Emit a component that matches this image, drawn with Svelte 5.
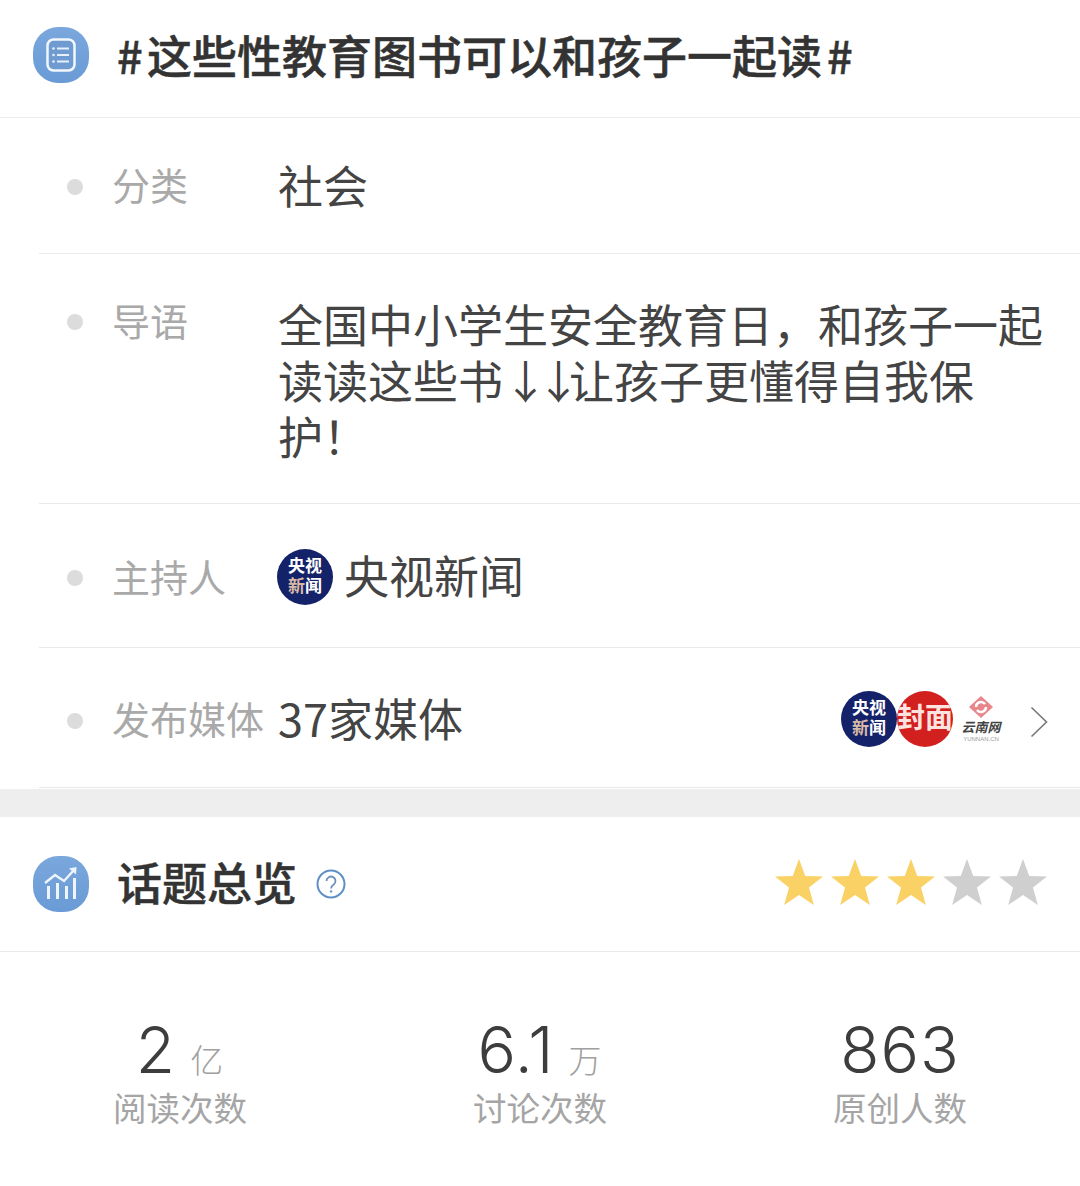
<script lang="ts">
  const rowStars = [true, true, true, false, false];
  const stats = [
    { value: '2', unit: '亿', label: '阅读次数' },
    { value: '6.1', unit: '万', label: '讨论次数' },
    { value: '863', unit: '', label: '原创人数' }
  ];
</script>

{#snippet cctv()}
  <span class="logo cctv">
    <span>央视</span>
    <span><em>新</em>闻</span>
  </span>
{/snippet}

<main class="page">
  <header class="head topic">
    <span class="badge">
      <svg viewBox="0 0 56 56" width="56" height="56">
        <rect x="14.5" y="12.5" width="27" height="31" rx="6" fill="#6f9bd0" stroke="#f2f7fc" stroke-width="2.5" />
        <g fill="#e6f0fa">
          <circle cx="20.5" cy="21.5" r="1.3" />
          <circle cx="20.5" cy="28" r="1.3" />
          <circle cx="20.5" cy="34.5" r="1.3" />
          <rect x="24" y="20.5" width="12" height="2" />
          <rect x="24" y="27" width="12" height="2" />
          <rect x="24" y="33.5" width="12" height="2" />
        </g>
      </svg>
    </span>
    <h1><span class="hash">#</span>这些性教育图书可以和孩子一起读<span class="hash end">#</span></h1>
  </header>

  <section class="rows">
    <div class="row first">
      <span class="dot"></span>
      <span class="label">分类</span>
      <div class="value">社会</div>
    </div>
    <div class="row intro">
      <span class="dot"></span>
      <span class="label">导语</span>
      <div class="value">全国中小学生安全教育日，和孩子一起读读这些书<span class="arrows">↓↓</span>让孩子更懂得自我保护！</div>
    </div>
    <div class="row host">
      <span class="dot"></span>
      <span class="label">主持人</span>
      <div class="value with-logo">
        {@render cctv()}
        <span>央视新闻</span>
      </div>
    </div>
    <div class="row media">
      <span class="dot"></span>
      <span class="label">发布媒体</span>
      <div class="value">37家媒体</div>
      <div class="media-logos">
        {@render cctv()}
        <span class="logo fengmian">封面</span>
        <span class="yunnan">
          <svg viewBox="0 0 32 24" width="32" height="24">
            <path d="M16 1 L28 12 L16 23 L4 12 Z" fill="#e8868c" />
            <path d="M11 12 a5 5 0 0 1 9 -3 M21 12 a5 5 0 0 1 -9 3" fill="none" stroke="#fff" stroke-width="2.4" />
          </svg>
          <b>云南网</b>
          <i>YUNNAN.CN</i>
        </span>
        <svg class="chevron" viewBox="0 0 18 32" width="18" height="32">
          <path d="M1.5 1.5 L16.5 16 L1.5 30.5" fill="none" stroke="#777" stroke-width="1.6" />
        </svg>
      </div>
    </div>
  </section>

  <div class="band"></div>

  <header class="head overview">
    <span class="badge">
      <svg viewBox="0 0 56 56" width="56" height="56">
        <g fill="#eef5fc">
          <rect x="14" y="30" width="3" height="13" />
          <rect x="23" y="27" width="3" height="16" />
          <rect x="32" y="30" width="3" height="13" />
          <rect x="40" y="22" width="3" height="21" />
        </g>
        <path d="M12 27 L22 19 L31 25 L41 14" fill="none" stroke="#eef5fc" stroke-width="2.4" />
        <path d="M36 12.5 L43.5 11 L43 18.5 Z" fill="#eef5fc" />
      </svg>
    </span>
    <h2>话题总览</h2>
    <svg class="help" viewBox="0 0 30 30" width="30" height="30">
      <circle cx="15" cy="15" r="13.5" fill="none" stroke="#5f8fc4" stroke-width="2" />
      <path d="M10.5 12 a4.5 4.5 0 1 1 7 3.8 c-1.6 1 -2.4 1.8 -2.4 3.6" fill="none" stroke="#6d8fb8" stroke-width="1.8" />
      <circle cx="15.1" cy="22.4" r="1.2" fill="#6d8fb8" />
    </svg>
    <div class="stars">
      {#each rowStars as on}
        <svg viewBox="0 0 50 48" width="50" height="48">
          <path
            d="M25 1 L31.2 18 L49 18.6 L35 29.6 L39.8 47 L25 37 L10.2 47 L15 29.6 L1 18.6 L18.8 18 Z"
            fill={on ? '#f9d164' : '#cfcfcf'}
          />
        </svg>
      {/each}
    </div>
  </header>

  <section class="stats">
    {#each stats as s}
      <div class="stat">
        <div class="num">{s.value}{#if s.unit}<small>{s.unit}</small>{/if}</div>
        <div class="stat-label">{s.label}</div>
      </div>
    {/each}
  </section>
</main>

<style>
  :global(body) {
    margin: 0;
    background: #fff;
  }

  .page {
    width: 1080px;
    height: 1186px;
    overflow: hidden;
    background: #fff;
    font-family: "Noto Sans CJK SC", "Liberation Sans", sans-serif;
    color: #444;
  }

  .head {
    display: flex;
    align-items: center;
    padding-left: 33px;
    box-sizing: border-box;
  }

  .topic {
    height: 118px;
    padding-bottom: 7px;
    border-bottom: 1px solid #ececec;
  }

  .badge {
    width: 56px;
    height: 56px;
    flex: none;
    border-radius: 45%;
    background: linear-gradient(180deg, #7aa7dc, #6a9bd6);
    display: flex;
  }

  h1,
  h2 {
    margin: 0;
    color: #333;
    font-weight: 500;
    -webkit-text-stroke: 0.5px #333;
  }

  h1 {
    margin-left: 28px;
    font-size: 45px;
    line-height: 56px;
    white-space: nowrap;
    display: flex;
  }

  .hash {
    width: 30px;
  }

  .hash.end {
    margin-left: 5px;
  }

  h2 {
    margin-left: 28px;
    margin-bottom: 4px;
    font-size: 45px;
    line-height: 56px;
  }

  .rows {
    padding-left: 39px;
  }

  .row {
    display: grid;
    grid-template-columns: 45px 166px 1fr;
    align-items: start;
    padding-left: 28px;
    padding-right: 28px;
    border-bottom: 1px solid #e9e9e9;
    box-sizing: border-box;
  }

  .row .dot {
    width: 16px;
    height: 16px;
    border-radius: 50%;
    background: #dcdcdc;
  }

  .row .label {
    font-size: 38px;
    line-height: 44px;
    color: #a9a9a9;
    white-space: nowrap;
  }

  .row .value {
    font-size: 45px;
    line-height: 55px;
    color: #444;
  }

  .arrows {
    letter-spacing: -12px;
  }

  .row.first {
    height: 136px;
    padding-top: 44px;
  }

  .first .dot {
    margin-top: 17px;
  }

  .first .value {
    margin-top: -5px;
  }

  .row.intro {
    height: 250px;
    padding-top: 44px;
  }

  .intro .dot {
    margin-top: 16px;
  }

  .intro .value {
    margin-top: -2px;
    line-height: 56px;
  }

  .row.host {
    height: 144px;
    padding-top: 46px;
  }

  .host .dot {
    margin-top: 20px;
  }

  .host .label {
    margin-top: 4px;
  }

  .with-logo {
    display: flex;
    align-items: center;
    gap: 11px;
    margin-top: -1px;
    margin-left: -1px;
  }

  .with-logo > span:last-child {
    margin-top: -5px;
  }

  .row.media {
    height: 140px;
    padding-top: 45px;
    position: relative;
  }

  .media .dot {
    margin-top: 20px;
  }

  .media .label {
    margin-top: 3px;
  }

  .media .value {
    margin-top: -3px;
  }

  .media-logos {
    position: absolute;
    top: 43px;
    right: 32px;
    display: flex;
    align-items: center;
  }

  .logo {
    width: 56px;
    height: 56px;
    border-radius: 50%;
    flex: none;
    display: flex;
    flex-direction: column;
    align-items: center;
    justify-content: center;
    font-family: "Liberation Sans", "Noto Sans CJK SC", sans-serif;
    font-weight: 700;
    color: #fff;
    overflow: hidden;
  }

  .cctv {
    background: #14226a;
    font-size: 17px;
    line-height: 20px;
  }

  .cctv em {
    font-style: normal;
    color: #d9b9a5;
  }

  .fengmian {
    background: #d2201f;
    font-size: 28px;
    line-height: 56px;
    white-space: nowrap;
    flex-direction: row;
    color: #fde3df;
  }

  .yunnan {
    width: 56px;
    display: flex;
    flex-direction: column;
    align-items: center;
    font-family: "Liberation Sans", "Noto Sans CJK SC", sans-serif;
    line-height: 1.2;
  }

  .yunnan b {
    font-size: 13px;
    color: #444;
    font-style: italic;
    margin-top: 1px;
  }

  .yunnan i {
    font-size: 6px;
    color: #999;
    font-style: normal;
  }

  .chevron {
    margin-left: 21px;
    margin-top: 6px;
  }

  .band {
    height: 28px;
    margin-top: 1px;
    background: #eeeeee;
  }

  .overview {
    height: 135px;
    border-bottom: 1px solid #e9e9e9;
  }

  .help {
    margin-left: 19px;
  }

  .stars {
    margin-left: auto;
    margin-right: 32px;
    margin-bottom: 5px;
    display: flex;
    gap: 6px;
  }

  .stats {
    display: grid;
    grid-template-columns: repeat(3, 1fr);
    margin-top: 64px;
  }

  .stat {
    display: flex;
    flex-direction: column;
    align-items: center;
  }

  .num {
    font-family: Inter, "Liberation Sans", sans-serif;
    font-weight: 300;
    font-size: 64px;
    letter-spacing: 1px;
    line-height: 68px;
    height: 68px;
    color: #3d3d3d;
    white-space: nowrap;
  }

  .num small {
    font-family: "Noto Sans CJK SC", sans-serif;
    font-size: 33px;
    line-height: 1;
    color: #a0a0a0;
    margin-left: 14px;
  }

  .stat-label {
    font-size: 33.5px;
    line-height: 44px;
    margin-top: 1px;
    color: #a5a5a5;
  }
</style>
